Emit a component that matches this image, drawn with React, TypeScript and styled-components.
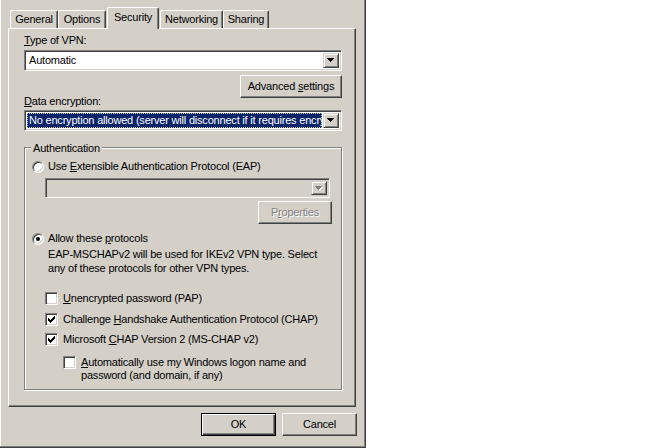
import React from 'react';
import styled, { createGlobalStyle } from 'styled-components';

const GlobalStyle = createGlobalStyle`
  html, body {
    margin: 0;
    padding: 0;
    background: #ffffff;
  }
  body {
    font-family: "Liberation Sans", Arial, sans-serif;
    font-size: 11px;
    letter-spacing: -0.2px;
    color: #000000;
  }
`;

const FACE = '#d4d0c8';
const SHADOW = '#808080';
const DARK = '#404040';

const Screen = styled.div`
  width: 666px;
  height: 448px;
  display: flex;
  background: #ffffff;
`;

const Window = styled.div`
  box-sizing: border-box;
  width: 366px;
  height: 448px;
  padding: 7px 0 0 8px;
  display: flex;
  flex-direction: column;
  background: ${FACE};
  border-right: 1px solid ${DARK};
  border-bottom: 1px solid ${DARK};
  box-shadow: inset -1px -1px 0 ${SHADOW}, inset 1px 0 0 #ffffff;
`;

const TabStrip = styled.div`
  display: flex;
  align-items: flex-end;
  height: 21px;
  padding-left: 2px;
  position: relative;
  z-index: 1;
`;

const Tab = styled.div<{ $active?: boolean; $width: number }>`
  box-sizing: border-box;
  position: relative;
  z-index: ${(p) => (p.$active ? 2 : 1)};
  width: ${(p) => p.$width}px;
  height: ${(p) => (p.$active ? 22 : 18)}px;
  margin: 0 ${(p) => (p.$active ? 1 : 0)}px ${(p) => (p.$active ? -1 : 0)}px;
  padding-bottom: ${(p) => (p.$active ? 2 : 0)}px;
  display: flex;
  align-items: center;
  justify-content: center;
  line-height: 13px;
  white-space: nowrap;
  background: ${FACE};
  border-top: 1px solid #ffffff;
  border-left: 1px solid #ffffff;
  border-right: 1px solid ${DARK};
  border-radius: 2px 2px 0 0;
  box-shadow: inset -1px 0 0 ${SHADOW};
`;

const Panel = styled.div`
  box-sizing: border-box;
  width: 348px;
  height: 379px;
  padding: 5px 13px 0 15px;
  display: flex;
  flex-direction: column;
  border-top: 1px solid #ffffff;
  border-left: 1px solid #ffffff;
  border-right: 1px solid ${DARK};
  border-bottom: 1px solid ${DARK};
  box-shadow: inset -1px -1px 0 ${SHADOW};
`;

const FieldLabel = styled.div<{ $shift?: number }>`
  line-height: 13px;
  margin-top: ${(p) => p.$shift ?? 0}px;
`;

const Combo = styled.div<{ $disabled?: boolean; $gap?: number; $height?: number }>`
  box-sizing: border-box;
  height: ${(p) => p.$height ?? 21}px;
  margin-top: ${(p) => p.$gap ?? 0}px;
  padding: 2px;
  display: flex;
  background: ${(p) => (p.$disabled ? FACE : '#ffffff')};
  border: 1px solid;
  border-color: ${SHADOW} #ffffff #ffffff ${SHADOW};
  box-shadow: inset 1px 1px 0 ${DARK}, inset -1px -1px 0 ${FACE};
`;

const SubCombo = styled(Combo)`
  margin-left: 13px;
  margin-right: 2px;
`;

const ComboValue = styled.div<{ $selected?: boolean }>`
  box-sizing: border-box;
  flex: 1;
  min-width: 0;
  margin-right: 1px;
  padding-left: 2px;
  display: flex;
  align-items: center;
  overflow: hidden;
  white-space: nowrap;
  line-height: 13px;
  color: ${(p) => (p.$selected ? '#ffffff' : '#000000')};
  background: ${(p) => (p.$selected ? '#0a246a' : 'transparent')};
  outline: ${(p) => (p.$selected ? '1px dotted #d8d0a0' : 'none')};
  outline-offset: -1px;
`;

const DropButton = styled.div`
  box-sizing: border-box;
  width: 16px;
  display: flex;
  align-items: center;
  justify-content: center;
  background: ${FACE};
  border: 1px solid;
  border-color: ${FACE} ${DARK} ${DARK} ${FACE};
  box-shadow: inset 1px 1px 0 #ffffff, inset -1px -1px 0 ${SHADOW};
`;

const ArrowShape = ({ fill, dx = 0 }: { fill: string; dx?: number }) => (
  <g fill={fill} transform={`translate(${dx} ${dx})`}>
    <rect x="0" y="0" width="7" height="1" />
    <rect x="1" y="1" width="5" height="1" />
    <rect x="2" y="2" width="3" height="1" />
    <rect x="3" y="3" width="1" height="1" />
  </g>
);

const Arrow = ({ disabled }: { disabled?: boolean }) => (
  <svg width="8" height="5" viewBox="0 0 8 5" shapeRendering="crispEdges">
    {disabled && <ArrowShape fill="#ffffff" dx={1} />}
    <ArrowShape fill={disabled ? SHADOW : '#000000'} />
  </svg>
);

const ButtonRow = styled.div<{ $gap?: number }>`
  display: flex;
  justify-content: flex-end;
  gap: 6px;
  margin-top: ${(p) => p.$gap ?? 0}px;
`;

const DialogButtons = styled(ButtonRow)`
  width: 349px;
`;

const Button = styled.button<{ $width: number; $default?: boolean }>`
  box-sizing: border-box;
  width: ${(p) => p.$width}px;
  height: 23px;
  padding: 0;
  font: inherit;
  letter-spacing: inherit;
  line-height: 13px;
  color: ${(p) => (p.disabled ? SHADOW : '#000000')};
  text-shadow: ${(p) => (p.disabled ? '1px 1px 0 #ffffff' : 'none')};
  background: ${FACE};
  border: 1px solid;
  border-color: ${(p) =>
    p.$default ? '#000000' : `#ffffff ${DARK} ${DARK} #ffffff`};
  box-shadow: ${(p) =>
    p.$default
      ? `inset 1px 1px 0 #ffffff, inset -1px -1px 0 ${DARK}, inset -2px -2px 0 ${SHADOW}`
      : `inset -1px -1px 0 ${SHADOW}`};
`;

const Group = styled.div`
  box-sizing: border-box;
  height: 243px;
  margin-top: 16px;
  padding: 0 9px 0 7px;
  display: flex;
  flex-direction: column;
  border: 1px solid ${SHADOW};
  box-shadow: inset 1px 1px 0 #ffffff, 1px 1px 0 #ffffff;
`;

const GroupTitle = styled.div`
  align-self: flex-start;
  margin: -6px 0 0 -1px;
  padding: 0 2px;
  line-height: 13px;
  background: ${FACE};
`;

const Option = styled.div<{ $gap: number; $indent?: number; $top?: boolean }>`
  display: flex;
  align-items: ${(p) => (p.$top ? 'flex-start' : 'center')};
  gap: 4px;
  margin-top: ${(p) => p.$gap}px;
  margin-left: ${(p) => p.$indent ?? 0}px;
  line-height: 13px;
`;

const RadioMark = styled.span<{ $checked?: boolean }>`
  box-sizing: border-box;
  flex: none;
  width: 12px;
  height: 12px;
  border-radius: 50%;
  display: flex;
  align-items: center;
  justify-content: center;
  background: #ffffff;
  border: 1px solid;
  border-color: ${SHADOW} #ffffff #ffffff ${SHADOW};
  box-shadow: inset 1px 1px 0 ${DARK}, inset -1px -1px 0 ${FACE};

  &::after {
    content: '';
    display: ${(p) => (p.$checked ? 'block' : 'none')};
    width: 4px;
    height: 4px;
    border-radius: 50%;
    background: #000000;
  }
`;

const CheckMark = styled.span`
  box-sizing: border-box;
  flex: none;
  width: 13px;
  height: 13px;
  margin-right: 1px;
  display: flex;
  align-items: center;
  justify-content: center;
  background: #ffffff;
  border: 1px solid;
  border-color: ${SHADOW} #ffffff #ffffff ${SHADOW};
  box-shadow: inset 1px 1px 0 ${DARK}, inset -1px -1px 0 ${FACE};
`;

const Tick = () => (
  <svg width="7" height="7" viewBox="0 0 7 7" shapeRendering="crispEdges">
    <g fill="#000000">
      <rect x="0" y="2" width="1" height="3" />
      <rect x="1" y="3" width="1" height="3" />
      <rect x="2" y="4" width="1" height="3" />
      <rect x="3" y="3" width="1" height="3" />
      <rect x="4" y="2" width="1" height="3" />
      <rect x="5" y="1" width="1" height="3" />
      <rect x="6" y="0" width="1" height="3" />
    </g>
  </svg>
);

const Note = styled.div`
  margin: 2px 0 0 16px;
  line-height: 14px;
`;

const Radio = ({ checked, gap, children }: { checked?: boolean; gap: number; children: React.ReactNode }) => (
  <Option $gap={gap}>
    <RadioMark $checked={checked} />
    <span>{children}</span>
  </Option>
);

const Check = ({
  checked,
  gap,
  indent,
  children,
}: {
  checked?: boolean;
  gap: number;
  indent: number;
  children: React.ReactNode;
}) => (
  <Option $gap={gap} $indent={indent} $top>
    <CheckMark>{checked && <Tick />}</CheckMark>
    <span>{children}</span>
  </Option>
);

const tabs = [
  { name: 'General', width: 48 },
  { name: 'Options', width: 48 },
  { name: 'Security', width: 52 },
  { name: 'Networking', width: 63 },
  { name: 'Sharing', width: 46 },
];

export default function App() {
  return (
    <Screen>
      <GlobalStyle />
      <Window>
        <TabStrip>
          {tabs.map((t) => (
            <Tab key={t.name} $width={t.width} $active={t.name === 'Security'}>
              {t.name}
            </Tab>
          ))}
        </TabStrip>
        <Panel>
          <FieldLabel>
            <u>T</u>ype of VPN:
          </FieldLabel>
          <Combo $gap={3}>
            <ComboValue>Automatic</ComboValue>
            <DropButton>
              <Arrow />
            </DropButton>
          </Combo>
          <ButtonRow $gap={4}>
            <Button $width={102}>
              Advanced <u>s</u>ettings
            </Button>
          </ButtonRow>
          <FieldLabel $shift={-3}>
            <u>D</u>ata encryption:
          </FieldLabel>
          <Combo $gap={2}>
            <ComboValue $selected>
              No encryption allowed (server will disconnect if it requires encryption)
            </ComboValue>
            <DropButton>
              <Arrow />
            </DropButton>
          </Combo>
          <Group>
            <GroupTitle>Authentication</GroupTitle>
            <Radio gap={5}>
              Use <u>E</u>xtensible Authentication Protocol (EAP)
            </Radio>
            <SubCombo $disabled $gap={5} $height={20}>
              <ComboValue />
              <DropButton>
                <Arrow disabled />
              </DropButton>
            </SubCombo>
            <ButtonRow $gap={3}>
              <Button $width={74} disabled>
                P<u>r</u>operties
              </Button>
            </ButtonRow>
            <Radio checked gap={8}>
              Allow these <u>p</u>rotocols
            </Radio>
            <Note>
              EAP-MSCHAPv2 will be used for IKEv2 VPN type. Select
              <br />
              any of these protocols for other VPN types.
            </Note>
            <Check gap={17} indent={13}>
              <u>U</u>nencrypted password (PAP)
            </Check>
            <Check checked gap={8} indent={13}>
              Challenge <u>H</u>andshake Authentication Protocol (CHAP)
            </Check>
            <Check checked gap={7} indent={13}>
              Microsoft <u>C</u>HAP Version 2 (MS-CHAP v2)
            </Check>
            <Check gap={10} indent={31}>
              <u>A</u>utomatically use my Windows logon name and
              <br />
              password (and domain, if any)
            </Check>
          </Group>
        </Panel>
        <DialogButtons $gap={6}>
          <Button $width={75} $default>
            OK
          </Button>
          <Button $width={75}>Cancel</Button>
        </DialogButtons>
      </Window>
    </Screen>
  );
}
